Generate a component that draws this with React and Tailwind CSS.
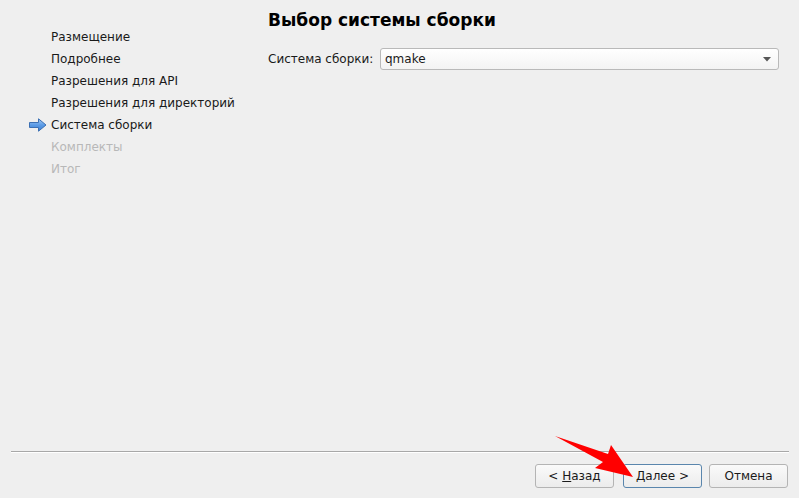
import React from 'react';

const steps = [
  { label: 'Размещение', state: 'done' },
  { label: 'Подробнее', state: 'done' },
  { label: 'Разрешения для API', state: 'done' },
  { label: 'Разрешения для директорий', state: 'done' },
  { label: 'Система сборки', state: 'current' },
  { label: 'Комплекты', state: 'todo' },
  { label: 'Итог', state: 'todo' },
];

function StepArrow() {
  return (
    <svg width="18" height="14" viewBox="0 0 18 14">
      <defs>
        <linearGradient id="ag" x1="0" y1="0" x2="0" y2="1">
          <stop offset="0" stopColor="#a9cdf5" />
          <stop offset="0.5" stopColor="#5b9be6" />
          <stop offset="1" stopColor="#3f7fcf" />
        </linearGradient>
      </defs>
      <path d="M0.5 4.5 H9.5 V0.8 L17 7 L9.5 13.2 V9.5 H0.5 Z" fill="url(#ag)" stroke="#3b6fb3" strokeWidth="1" strokeLinejoin="round" />
    </svg>
  );
}

function Button({ children, primary }) {
  return (
    <button
      className={
        'h-[24px] w-[79px] rounded-[3px] border text-[12px] text-[#1a1a1a] bg-gradient-to-b from-[#fafafa] to-[#ececec] ' +
        (primary ? 'border-[#5a86ad]' : 'border-[#b4b4b4]')
      }
    >
      {children}
    </button>
  );
}

export default function App() {
  return (
    <div
      className="relative flex h-[498px] w-[799px] flex-col bg-[#efefef] text-[12px] text-[#1a1a1a]"
      style={{ fontFamily: '"DejaVu Sans", sans-serif' }}
    >
      <div className="flex flex-1">
        <div className="w-[268px] pl-[29px] pt-[26px]">
          {steps.map((s) => (
            <div key={s.label} className="flex h-[22px] items-center">
              <div className="flex w-[22px] items-center">{s.state === 'current' && <StepArrow />}</div>
              <span className={s.state === 'todo' ? 'text-[#b8b8b8]' : 'text-[#1a1a1a]'}>{s.label}</span>
            </div>
          ))}
        </div>
        <div className="flex-1 pr-[20px] pt-[9px]">
          <div className="h-[22px] text-[17px] font-bold leading-[22px] text-black">Выбор системы сборки</div>
          <div className="mt-[17px] flex items-center">
            <span className="w-[112px]">Система сборки:</span>
            <div className="flex h-[22px] flex-1 items-center justify-between rounded-[3px] border border-[#b9b9b9] bg-gradient-to-b from-white to-[#f3f3f3] pl-[4px] pr-[7px]">
              <span>qmake</span>
              <svg width="8" height="5" viewBox="0 0 8 5">
                <path d="M0 0 H8 L4 4.5 Z" fill="#555" />
              </svg>
            </div>
          </div>
        </div>
      </div>
      <div className="mx-[11px] mr-[10px] border-t border-b border-t-[#a8a8a8] border-b-white" />
      <div className="flex justify-end gap-[7px] pl-[11px] pr-[11px] pb-[10px] pt-[11px]">
        <div className="mr-[2px]">
          <Button>
            &lt; <span className="underline">Н</span>азад
          </Button>
        </div>
        <Button primary>
          <span className="underline">Д</span>алее &gt;
        </Button>
        <Button>Отмена</Button>
      </div>
      <svg className="pointer-events-none absolute left-0 top-0" width="799" height="498">
        <polygon points="555,436 608,454 611,445 633,477 595,468 603,462" fill="#ff0000" />
      </svg>
    </div>
  );
}
